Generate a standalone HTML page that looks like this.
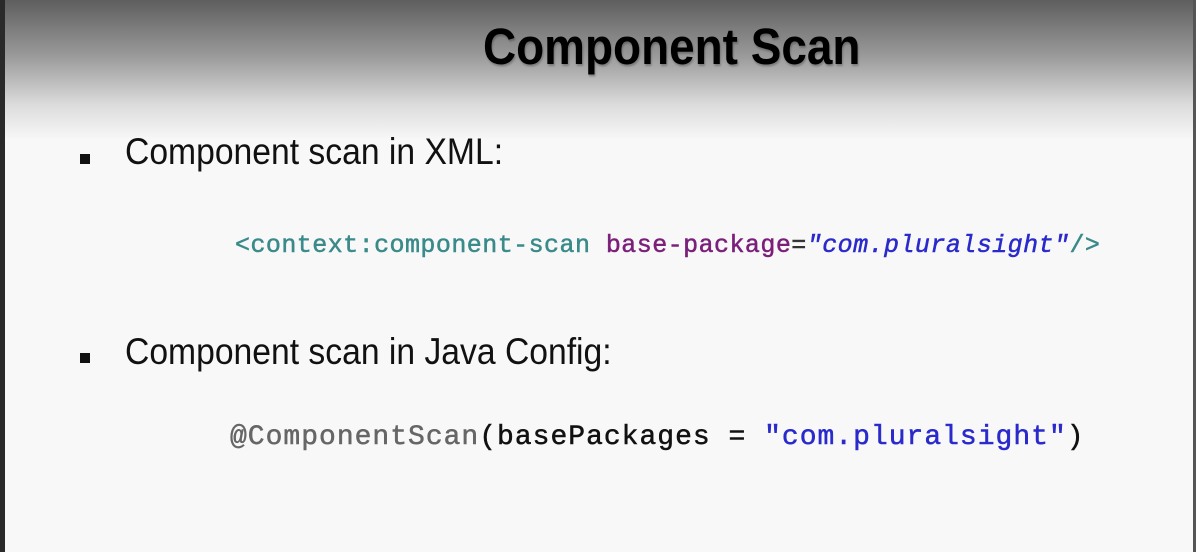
<!DOCTYPE html>
<html><head><meta charset="utf-8"><style>
html,body{margin:0;padding:0}
body{width:1196px;height:552px;position:relative;overflow:hidden;background:#f8f8f8;font-family:"Liberation Sans",sans-serif}
.hdr{position:absolute;left:0;top:0;width:1196px;height:140px;background:linear-gradient(#5e5e5e 0%,#9a9a9a 40%,#dcdcdc 75%,#f8f8f8 100%)}
.lb{position:absolute;left:0;top:0;width:5px;height:552px;background:#2a2a2a}
.rb{position:absolute;right:0;top:0;width:3px;height:552px;background:#555}
.t{position:absolute;white-space:nowrap;transform-origin:0 0}
.title{left:483px;top:17px;font-size:51px;font-weight:bold;color:#000;transform:scaleX(0.9);text-shadow:1px 2px 2px rgba(0,0,0,.25)}
.b{position:absolute;width:10px;height:10px;background:#111}
.txt{font-size:37px;color:#111;transform:scaleX(0.91)}
.code{font-family:"Liberation Mono",monospace;-webkit-text-stroke:0.5px currentColor}
</style></head><body>
<div class="hdr"></div>
<div class="lb"></div><div class="rb"></div>
<div class="t title">Component Scan</div>
<div class="b" style="left:80px;top:154px"></div>
<div class="t txt" style="left:125px;top:131px">Component scan in XML:</div>
<div class="t code" style="left:235px;top:231px;font-size:25px;letter-spacing:0.45px"><span style="color:#3a8a8a">&lt;context:component-scan</span> <span style="color:#7a1f7a">base-package</span><span style="color:#333">=</span><span style="color:#2a2acc;font-style:italic">"com.pluralsight"</span><span style="color:#3a8a8a">/&gt;</span></div>
<div class="b" style="left:80px;top:353px"></div>
<div class="t txt" style="left:125px;top:331px">Component scan in Java Config:</div>
<div class="t code" style="left:230px;top:422px;font-size:28px;letter-spacing:1px"><span style="color:#666">@ComponentScan</span><span style="color:#111">(basePackages = </span><span style="color:#2a2acc">"com.pluralsight"</span><span style="color:#111">)</span></div>
</body></html>
